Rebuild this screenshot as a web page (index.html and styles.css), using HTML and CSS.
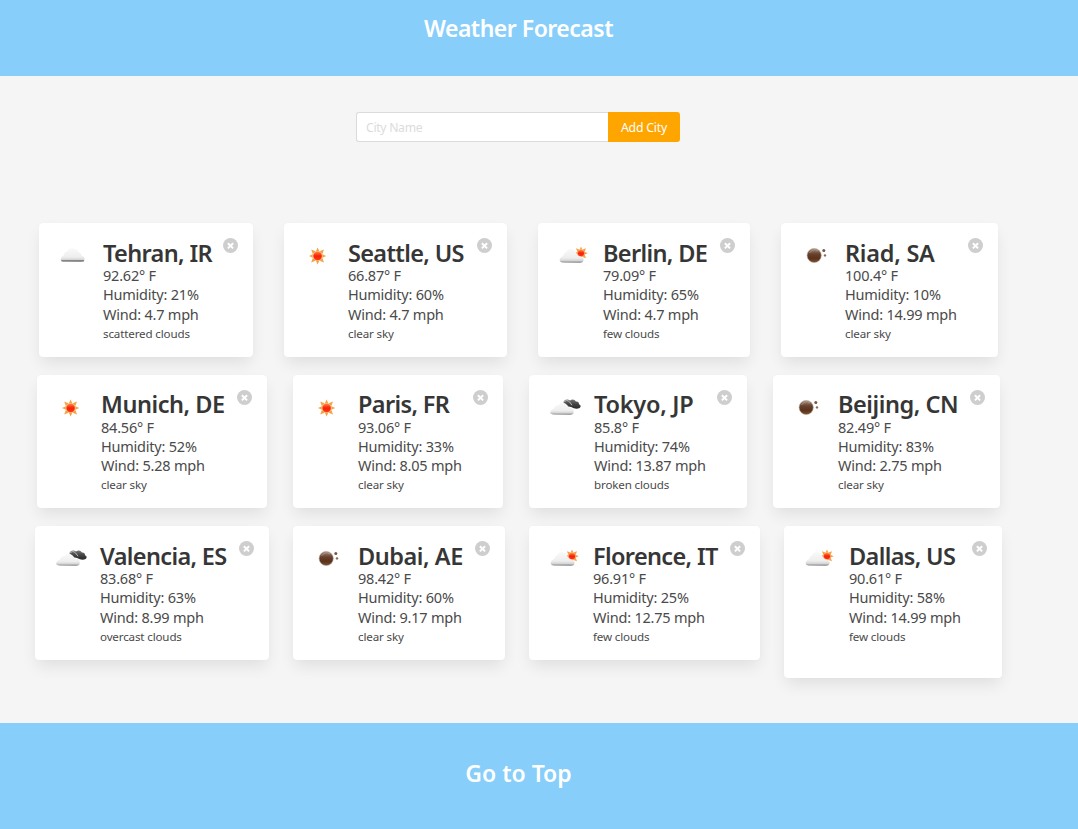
FILE: index.html
```html
<!DOCTYPE html>
<html lang="en">
<head>
<meta charset="utf-8">
<title>Weather Forecast</title>
<link rel="stylesheet" href="styles.css">
</head>
<body>
<svg class="defs" width="0" height="0" aria-hidden="true">
  <defs>
    <linearGradient id="g-cloud" x1="0" y1="0" x2="0" y2="1"><stop offset="0" stop-color="#f9f9f9"/><stop offset=".65" stop-color="#eeeeee"/><stop offset=".85" stop-color="#d4d4d4"/><stop offset="1" stop-color="#777"/></linearGradient>
    <linearGradient id="g-dark" x1="0" y1="0" x2="0" y2="1"><stop offset="0" stop-color="#777"/><stop offset=".5" stop-color="#444"/><stop offset="1" stop-color="#292929"/></linearGradient>
    <linearGradient id="g-sun" x1="0" y1="0" x2="0" y2="1"><stop offset="0" stop-color="#ff8a3c"/><stop offset=".5" stop-color="#f8200a"/><stop offset="1" stop-color="#ff3a0a"/></linearGradient>
    <linearGradient id="g-moon" x1="0" y1="0" x2="0" y2="1"><stop offset="0" stop-color="#a58c7e"/><stop offset=".4" stop-color="#67412c"/><stop offset=".7" stop-color="#5a331c"/><stop offset="1" stop-color="#80502f"/></linearGradient>
    <g id="rays"><path d="M0-8.6 1.7-4.7-1.7-4.7ZM0 8.6 1.7 4.7-1.7 4.7ZM8.6 0 4.7 1.7 4.7-1.7ZM-8.6 0-4.7 1.7-4.7-1.7ZM6.4-6.4 4.8-2 2-4.8ZM-6.4-6.4-4.8-2-2-4.8ZM6.4 6.4 4.8 2 2 4.8ZM-6.4 6.4-4.8 2-2 4.8Z" fill="#f2a445"/><circle r="4.6" fill="url(#g-sun)" stroke="#fcb070" stroke-width=".8"/></g>
    <symbol id="scattered" viewBox="0 0 34 22"><path d="M5 17.6Q0 17.2.8 14.8Q1.2 12.2 3.6 11.4Q4.5 7.8 7.6 7Q9 3.4 13 4.6Q17 5 18.6 8.2Q20.5 8 21.5 11.4Q25 12.5 24.5 15.6Q24 17.8 21 17.8Z" fill="url(#g-cloud)"/><path d="M2 16.8H23.5" stroke="#858585" stroke-width="1.6" stroke-linecap="round"/></symbol>
    <symbol id="sun" viewBox="0 0 34 22"><use href="#rays" x="12.6" y="12"/></symbol>
    <symbol id="few" viewBox="0 0 34 22"><use href="#rays" transform="translate(22 9.2) scale(.78)"/><path d="M4 18.6Q-.5 18 1 14.8Q1.6 12.4 4.2 12Q4.8 8.8 7.4 8Q8.8 4.4 12.5 5Q15.8 5.6 17 8.6Q18.2 11.6 20.5 12.2Q25.2 13.4 24.7 16.2Q24 18.8 21 18.8Z" fill="url(#g-cloud)"/></symbol>
    <symbol id="broken" viewBox="-1 0 34 22"><path d="M15 10Q11 6.5 13.5 4.6Q16 2.4 19 4.6Q22.5 1.8 25 5.6Q28 5.4 28 8.2Q31 9.6 28.6 12Q25 14 20 11Z" fill="url(#g-dark)"/><path d="M12.4 6.8Q15.5 2.7 18.6 6L21 9.2" fill="none" stroke="#c4c4c4" stroke-width=".9"/><path d="M3 18.6Q-2.4 18 -.4 15.2Q.2 13.4 2.8 12.8Q4 9.4 7.2 9Q11 5.2 15 8Q17 9.4 17.4 11.6Q23.4 12 22.7 15.6Q23 18.8 19 18.8Z" fill="url(#g-cloud)"/></symbol>
    <symbol id="moon" viewBox="0 0 34 22"><circle cx="12.2" cy="11.5" r="7.1" fill="url(#g-moon)" stroke="#b5a298" stroke-width=".6"/><path d="M7.6 8.8Q11.5 3.8 16 7" fill="none" stroke="#bda99e" stroke-width=".9" opacity=".7"/><circle cx="21.8" cy="6.4" r="1.5" fill="#785442"/><circle cx="23" cy="11.4" r="1.2" fill="#8a695a"/></symbol>
    <symbol id="close" viewBox="0 0 15 15"><circle cx="7.5" cy="7.5" r="7.5" fill="#cecece"/><path d="M4.9 5.2 10.1 10.4M10.1 5.2 4.9 10.4" stroke="#fff" stroke-width="2"/></symbol>
  </defs>
</svg>
<header class="header"><h1 class="heading title">Weather Forecast</h1></header>
<main class="main">
  <form class="search"><input class="field" type="text" placeholder="City Name"><button class="add" type="button">Add City</button></form>
  <div class="row row-1">
    <article class="card"><svg class="icon"><use href="#scattered"/></svg><div><h2 class="city tight">Tehran, IR</h2><p>92.62° F</p><p>Humidity: 21%</p><p>Wind: 4.7 mph</p><p class="sky">scattered clouds</p></div><svg class="close"><use href="#close"/></svg></article>
    <article class="card"><svg class="icon"><use href="#sun"/></svg><div><h2 class="city tight">Seattle, US</h2><p>66.87° F</p><p>Humidity: 60%</p><p>Wind: 4.7 mph</p><p class="sky">clear sky</p></div><svg class="close"><use href="#close"/></svg></article>
    <article class="card inset"><svg class="icon"><use href="#few"/></svg><div><h2 class="city tight">Berlin, DE</h2><p>79.09° F</p><p>Humidity: 65%</p><p>Wind: 4.7 mph</p><p class="sky">few clouds</p></div><svg class="close"><use href="#close"/></svg></article>
    <article class="card"><svg class="icon"><use href="#moon"/></svg><div><h2 class="city loose">Riad, SA</h2><p>100.4° F</p><p>Humidity: 10%</p><p>Wind: 14.99 mph</p><p class="sky">clear sky</p></div><svg class="close"><use href="#close"/></svg></article>
  </div>
  <div class="row row-2">
    <article class="card"><svg class="icon"><use href="#sun"/></svg><div><h2 class="city">Munich, DE</h2><p>84.56° F</p><p>Humidity: 52%</p><p>Wind: 5.28 mph</p><p class="sky">clear sky</p></div><svg class="close"><use href="#close"/></svg></article>
    <article class="card inset"><svg class="icon"><use href="#sun"/></svg><div><h2 class="city tight">Paris, FR</h2><p>93.06° F</p><p>Humidity: 33%</p><p>Wind: 8.05 mph</p><p class="sky">clear sky</p></div><svg class="close"><use href="#close"/></svg></article>
    <article class="card inset"><svg class="icon"><use href="#broken"/></svg><div><h2 class="city loose">Tokyo, JP</h2><p>85.8° F</p><p>Humidity: 74%</p><p>Wind: 13.87 mph</p><p class="sky">broken clouds</p></div><svg class="close"><use href="#close"/></svg></article>
    <article class="card inset"><svg class="icon"><use href="#moon"/></svg><div><h2 class="city">Beijing, CN</h2><p>82.49° F</p><p>Humidity: 83%</p><p>Wind: 2.75 mph</p><p class="sky">clear sky</p></div><svg class="close"><use href="#close"/></svg></article>
  </div>
  <div class="row row-3">
    <article class="card inset"><svg class="icon"><use href="#broken"/></svg><div><h2 class="city tight">Valencia, ES</h2><p>83.68° F</p><p>Humidity: 63%</p><p>Wind: 8.99 mph</p><p class="sky">overcast clouds</p></div><svg class="close"><use href="#close"/></svg></article>
    <article class="card inset"><svg class="icon"><use href="#moon"/></svg><div><h2 class="city">Dubai, AE</h2><p>98.42° F</p><p>Humidity: 60%</p><p>Wind: 9.17 mph</p><p class="sky">clear sky</p></div><svg class="close"><use href="#close"/></svg></article>
    <article class="card"><svg class="icon"><use href="#few"/></svg><div><h2 class="city tight">Florence, IT</h2><p>96.91° F</p><p>Humidity: 25%</p><p>Wind: 12.75 mph</p><p class="sky">few clouds</p></div><svg class="close"><use href="#close"/></svg></article>
    <article class="card inset tall"><svg class="icon"><use href="#few"/></svg><div><h2 class="city tight">Dallas, US</h2><p>90.61° F</p><p>Humidity: 58%</p><p>Wind: 14.99 mph</p><p class="sky">few clouds</p></div><svg class="close"><use href="#close"/></svg></article>
  </div>
</main>
<footer class="footer"><a class="heading">Go to Top</a></footer>
</body>
</html>
```
FILE: styles.css
```css
* { box-sizing: border-box; }
body { margin: 0; height: 829px; overflow: hidden; display: flex; flex-direction: column; background: #f5f5f5; color: #4a4a4a; font-family: "Segoe UI", "Noto Sans", sans-serif; }
h1, h2, p { margin: 0; }
.defs { position: absolute; }
.header { height: 76px; background: #87cefa; padding: 11px 41px 0 0; text-align: center; }
.heading { color: #fff; font-size: 23px; font-weight: 600; line-height: 34px; letter-spacing: 0; }
.heading.title { letter-spacing: -.5px; }
.main { height: 647px; padding-top: 36px; }
.search { display: flex; width: 324px; height: 30px; margin: 0 0 81px 356px; }
.field { width: 252px; padding: 1px 9px 0; border: 1px solid #dbdbdb; border-right: 0; border-radius: 3px 0 0 3px; background: #fff; font: 12.2px "Segoe UI", "Noto Sans", sans-serif; letter-spacing: -.3px; outline: 0; }
.field::placeholder { color: #dcdcdc; opacity: 1; }
.add { width: 72px; padding: 1px 0 0; border: 0; border-radius: 0 3px 3px 0; background: #ffa500; color: #fff; font: 12.3px "Segoe UI", "Noto Sans", sans-serif; letter-spacing: -.2px; }
.row { display: grid; align-items: start; }
.row-1 { grid-template-columns: 214px 223px 212px 217px; column-gap: 31px; padding-left: 39px; height: 152px; }
.row-2 { grid-template-columns: 230px 210px 218px 227px; column-gap: 26px; padding-left: 37px; height: 151px; }
.row-3 { grid-template-columns: 234px 212px 231px 218px; column-gap: 24px; padding-left: 35px; }
.card { position: relative; display: grid; grid-template-columns: 43px 1fr; height: 134px; padding: 17px 0 0 21px; border-radius: 4px; background: #fff; box-shadow: 0 8px 16px -2px rgba(10,10,10,.09), 0 0 1px rgba(10,10,10,.05); }
.card.inset { grid-template-columns: 44px 1fr; }
.row-2 .card { height: 133px; }
.row-3 .card.tall { height: 152px; }
.icon { width: 34px; height: 22px; margin-top: 4px; }
.close { position: absolute; top: 15px; right: 15px; width: 15px; height: 15px; }
.city { color: #363636; font-size: 23.5px; font-weight: 600; line-height: 26px; letter-spacing: -.45px; white-space: nowrap; }
.city.tight { letter-spacing: -.65px; }
.city.loose { letter-spacing: -.25px; }
.row-2 .city { line-height: 24px; margin-bottom: 2px; }
.card p { font-size: 14.5px; line-height: 19.4px; letter-spacing: -.22px; }
.row-2 .card p { line-height: 19.1px; }
.card .sky { font-size: 11.6px; letter-spacing: -.15px; }
.footer { height: 106px; background: #87cefa; padding: 33px 41px 0 0; text-align: center; }
```
